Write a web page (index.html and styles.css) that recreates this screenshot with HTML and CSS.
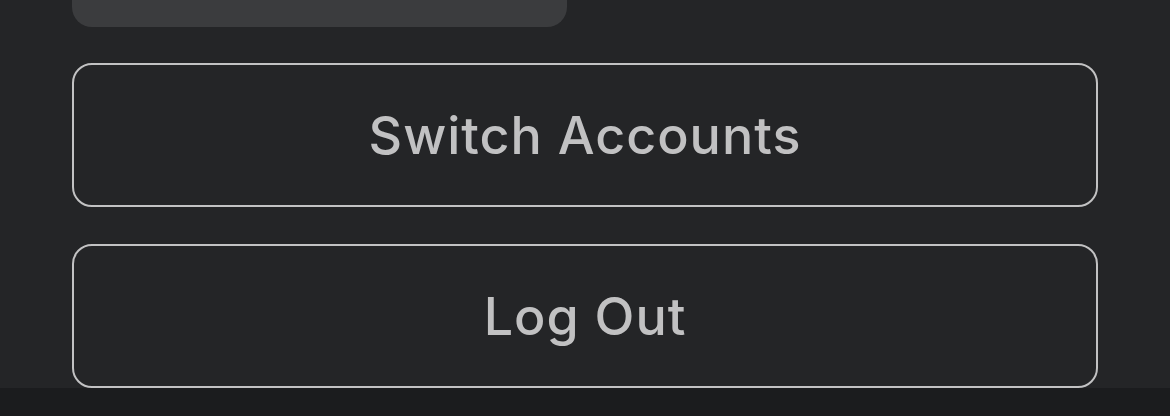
FILE: index.html
```html
<!DOCTYPE html>
<html>
<head>
<meta charset="utf-8">
<link rel="stylesheet" href="styles.css">
</head>
<body>
<div class="page">
  <div class="content">
    <div class="card-tail"></div>
    <button class="outline-btn first">Switch Accounts</button>
    <button class="outline-btn second">Log Out</button>
  </div>
  <div class="bottom-bar"></div>
</div>
</body>
</html>
```
FILE: styles.css
```css
html, body {
  margin: 0;
  padding: 0;
  background: #242527;
  height: 100%;
  overflow: hidden;
}
.page {
  width: 1170px;
  height: 416px;
  display: flex;
  flex-direction: column;
}
.content {
  flex: 1;
  display: flex;
  flex-direction: column;
  padding: 0 72px;
}
.card-tail {
  width: 495px;
  height: 27px;
  background: #3b3c3e;
  border-radius: 0 0 20px 20px;
}
.outline-btn {
  box-sizing: border-box;
  height: 144px;
  width: 100%;
  background: transparent;
  border: 2px solid #c2c2c3;
  border-radius: 20px;
  color: #c1c1c2;
  font-family: Inter, "Liberation Sans", sans-serif;
  font-weight: 500;
  font-size: 52px;
  letter-spacing: 1px;
  display: flex;
  align-items: center;
  justify-content: center;
  padding: 0;
}
.first { margin-top: 36px; }
.second { margin-top: 37px; }
.bottom-bar {
  height: 28px;
  background: #1b1c1e;
}
```
